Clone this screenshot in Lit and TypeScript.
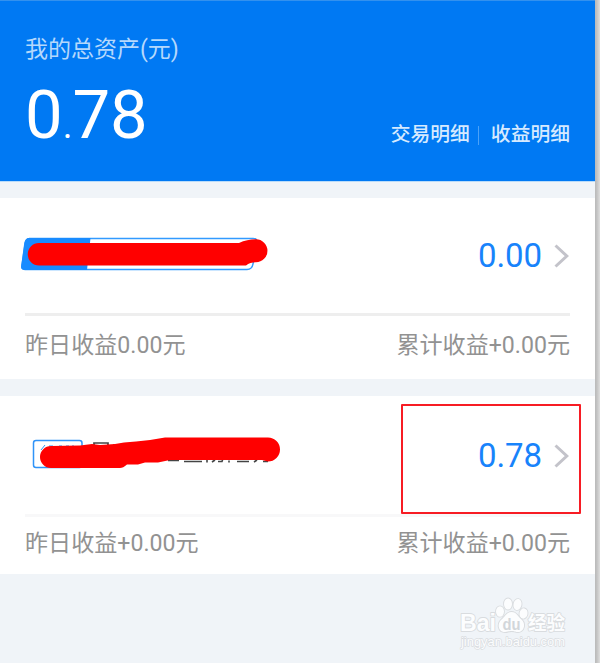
import { LitElement, html, css, svg, nothing } from "lit";
import { customElement, property } from "lit/decorators.js";

@customElement("fund-card")
class FundCard extends LitElement {
  @property() amount = "";
  @property() daily = "";
  @property() total = "";
  @property({ type: Boolean }) marked = false;

  static styles = css`
    :host {
      display: flex;
      flex-direction: column;
      position: relative;
      box-sizing: border-box;
      background: #fff;
      padding: 0 25px;
    }
    .top {
      display: flex;
      align-items: center;
      justify-content: space-between;
      height: 118px;
      box-sizing: border-box;
      padding-top: 1px;
      border-bottom: 3px solid #eee;
    }
    :host([marked]) .top {
      height: 121px;
      padding-top: 2px;
      border-bottom-color: #f8f8f9;
    }
    .name {
      display: block;
      margin-left: -25px;
      width: 300px;
      height: 60px;
    }
    .value {
      display: flex;
      align-items: center;
      gap: 12px;
      color: #1883fb;
      font-size: 33px;
      line-height: 40px;
      letter-spacing: -0.1px;
    }
    .arrow {
      display: block;
      width: 16px;
      height: 24px;
    }
    .bottom {
      display: flex;
      justify-content: space-between;
      align-items: center;
      height: 59px;
      padding-bottom: 4px;
      color: #929292;
      font-size: 23.1px;
      line-height: 30px;
    }
    :host([marked]) .bottom {
      height: 54px;
      padding-bottom: 3px;
    }
    .frame {
      position: absolute;
      left: 401px;
      top: 8px;
      width: 180px;
      height: 110px;
      box-sizing: border-box;
      border: 2px solid #f71c24;
      border-radius: 1px;
    }
  `;

  private plainName() {
    return svg`
      <path d="M29 12.500H252Q258 12 256.500 17L253 38Q252 43.500 247 43.500H25Q21 43.500 22 39L25 17Q26 12.500 30 12.500Z" fill="#fff" stroke="#329aff" stroke-width="1.500"/>
      <path d="M29 12H90.500L87 44H25Q20.500 44 21.200 40L24.500 17Q25.500 12 29 12Z" fill="#188bff"/>
      <path d="M39 17H239Q247 13.300 256 13.300A11.300 11.300 0 0 1 256 36.200Q250 36.200 246 39.500H39A11.200 11.200 0 0 1 39 17Z" fill="#f00"/>`;
  }

  private taggedName() {
    return svg`
      <rect x="33.500" y="14.500" width="48.500" height="27" rx="2.500" fill="#fff" stroke="#2f93f8" stroke-width="1.500"/>
      <path d="M45 19l-4 5M49 20h4M59 20h3M66 20h3M72 20h2" stroke="#2f93f8" fill="none"/>
      <path d="M94 23V17h14v6M113 19h3M122 17v4" stroke="#444" stroke-width="1.700" fill="none"/>
      <path d="M168 34.500h11M184 35.500h18M207 33.500v3M212 36l3-2M218 35.500h4l1-3M229 34.500v2M237 35.500h12M254 36l3-2M263 35.500h5" stroke="#444" stroke-width="1.600" fill="none"/>
      <path d="M51 20L80 19.500 92 18 100 19 115 18 124 16.500 136 15.500 150 14 165 11.500H268A11.900 11.900 0 0 1 268 35.500L262 34H170L158 36.500H145L138 38.500H127Q123 42 120 42H51A11 11 0 0 1 51 20Z" fill="#f00"/>`;
  }

  render() {
    return html`
      <div class="top">
        <svg class="name" viewBox="0 0 300 60">${this.marked ? this.taggedName() : this.plainName()}</svg>
        <div class="value">
          <span>${this.amount}</span>
          <svg class="arrow" viewBox="0 0 16 24">
            <path d="M1.500 1.500L12.800 12 1.500 22.500" fill="none" stroke="#c3c3ca" stroke-width="3"/>
          </svg>
        </div>
      </div>
      <div class="bottom"><span>${this.daily}</span><span>${this.total}</span></div>
      ${this.marked ? html`<div class="frame"></div>` : nothing}
    `;
  }
}

@customElement("app-root")
class AppRoot extends LitElement {
  static styles = css`
    :host {
      display: flex;
      width: 600px;
      height: 663px;
      overflow: hidden;
      font-family: Roboto, "Noto Sans CJK SC", sans-serif;
    }
    .screen {
      display: flex;
      flex-direction: column;
      gap: 17px;
      width: 595px;
      background: #f0f4f8;
    }
    .edge {
      flex: 1;
      background: linear-gradient(90deg, #b9b9b9, #c4c4c4 40%, #dedede);
    }
    .head {
      display: flex;
      justify-content: space-between;
      height: 181px;
      box-sizing: border-box;
      padding: 34px 25px 0 25px;
      background: #0079f3;
      border-top: 1px solid #3391ee;
      box-shadow: 0 1px 0 #b9dcfa;
    }
    .label {
      color: #b5d8fc;
      font-size: 23px;
      line-height: 30px;
    }
    .sum {
      color: #fff;
      font-size: 67px;
      line-height: 80px;
      margin-top: 10px;
    }
    .dot {
      font-size: 37px;
    }
    .links {
      display: flex;
      align-items: center;
      align-self: flex-start;
      margin-top: 85px;
      color: #d6eaff;
      font-size: 19.8px;
      font-weight: 500;
      line-height: 30px;
    }
    .bar {
      width: 1px;
      height: 19px;
      margin: 0 12px 0 8px;
      background: #4ba2f8;
    }
    .foot {
      display: flex;
      justify-content: flex-end;
    }
    .mark {
      display: block;
      width: 120px;
      height: 60px;
      margin-right: 22px;
      font-family: "Liberation Sans", "Noto Sans CJK SC", sans-serif;
    }
  `;

  render() {
    return html`
      <div class="screen">
        <div class="head">
          <div>
            <div class="label">我的总资产(元)</div>
            <div class="sum">0<span class="dot">.</span>78</div>
          </div>
          <div class="links"><span>交易明细</span><i class="bar"></i><span>收益明细</span></div>
        </div>
        <fund-card amount="0.00" daily="昨日收益0.00元" total="累计收益+0.00元"></fund-card>
        <fund-card marked amount="0.78" daily="昨日收益+0.00元" total="累计收益+0.00元"></fund-card>
        <div class="foot">
          <svg class="mark" viewBox="453 591 120 60">
            <g fill="#fcfdfe" stroke="#d9dcdf" stroke-width="1.800" paint-order="stroke" stroke-linejoin="round">
              <text x="460" y="631" font-size="24" font-weight="700" textLength="36" lengthAdjust="spacingAndGlyphs">Bai</text>
              <ellipse cx="500" cy="611.500" rx="4" ry="5.200"/>
              <ellipse cx="508" cy="604" rx="4" ry="5.500"/>
              <ellipse cx="517.500" cy="604.500" rx="4" ry="5.500" transform="rotate(12 517.500 604.500)"/>
              <ellipse cx="523.500" cy="613.500" rx="4" ry="5.200" transform="rotate(10 523.500 613.500)"/>
              <path d="M511.500 612C517 612 518 617 522 620C526 624 524 632 518 632C514 632 515 631 511.500 631C508 631 508 632 505 632C498 632 497 624 501 620C505 617 506 612 511.500 612Z"/>
              <text x="528" y="630" font-size="19" font-weight="700" textLength="37" lengthAdjust="spacingAndGlyphs">经验</text>
              <text x="461" y="645.500" font-size="13" stroke-width="1.400" textLength="104" lengthAdjust="spacingAndGlyphs">jingyan.baidu.com</text>
            </g>
            <text x="502.500" y="629.500" font-size="16" font-weight="700" fill="#d2d6da" textLength="18" lengthAdjust="spacingAndGlyphs">du</text>
          </svg>
        </div>
      </div>
      <div class="edge"></div>
    `;
  }
}
